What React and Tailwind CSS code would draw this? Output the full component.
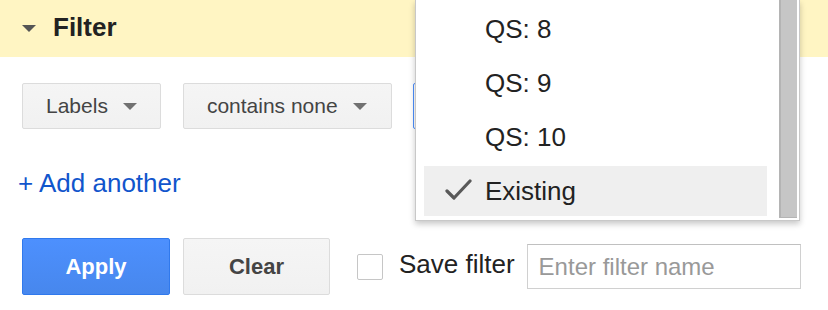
import React from "react"

const font = { fontFamily: '"Liberation Sans", Arial, sans-serif' }

function Caret({ className = "" }) {
  return (
    <svg width="14" height="7" viewBox="0 0 14 7" className={className}>
      <path d="M0 0 H14 L7 7 Z" fill="currentColor" />
    </svg>
  )
}

function SelectButton({ label, wide }) {
  return (
    <button className={`h-[46px] flex items-center gap-[15px] rounded-[2px] border border-[#dcdcdc] bg-gradient-to-b from-[#f5f5f5] to-[#f1f1f1] text-[21px] text-[#444] ${wide ? "pl-[23px] pr-[24px]" : "px-[23px]"}`}>
      <span>{label}</span>
      <Caret className="text-[#717171]" />
    </button>
  )
}

function Dropdown() {
  const items = ["QS: 8", "QS: 9", "QS: 10", "Existing"]
  return (
    <div className="absolute left-[415px] top-0 w-[385px] h-[221px] bg-white border-x border-b border-[#c8c8c8] shadow-[0_3px_6px_rgba(0,0,0,0.22)] flex z-10">
      <div className="flex-1 pl-[8px] pr-[12px] py-[2px]">
        {items.map((it) => {
          const active = it === "Existing"
          return (
            <div key={it} className="h-[54px] py-[2px]">
              <div className={`h-[50px] flex items-center pl-[61px] relative text-[26px] text-[#222] ${active ? "bg-[#efefef]" : ""}`}>
                {active && (
                  <svg width="27" height="22" viewBox="0 0 27 22" className="absolute left-[21px] top-[13px]">
                    <path d="M2 12 L9 19 L25 2" fill="none" stroke="#595959" strokeWidth="3.2" strokeLinecap="round" strokeLinejoin="round" />
                  </svg>
                )}
                {it}
              </div>
            </div>
          )
        })}
      </div>
      <div className="w-[18px] h-[218px] bg-[#c6c6c6] border-l-2 border-b border-[#b4b4b4]" />
      <div className="w-[2px]" />
    </div>
  )
}

export default function App() {
  return (
    <div className="relative w-[828px] h-[310px] bg-white overflow-hidden" style={font}>
      <Dropdown />

      <div className="h-[57px] bg-[#fff5c3] flex items-center pl-[22px] gap-[17px]">
        <Caret className="text-[#555]" />
        <span className="text-[26px] font-bold text-[#222] -mt-[2px]">Filter</span>
      </div>

      <div className="pl-[22px]">
        <div className="mt-[26px] flex gap-[22px]">
          <SelectButton label="Labels" />
          <SelectButton label="contains none" wide />
          <button className="h-[46px] w-[360px] -ml-[1px] rounded-[2px] border border-[#4d90fe] bg-white" />
        </div>

        <div className="mt-[39px] h-[30px] leading-[30px] text-[26px] text-[#1155cc] -ml-[4px]">
          + Add another
        </div>

        <div className="mt-[40px] flex items-center">
          <button className="h-[57px] w-[148px] rounded-[2px] border border-[#3079ed] bg-gradient-to-b from-[#4d90fe] to-[#4787ed] text-white font-bold text-[22px]">
            Apply
          </button>
          <button className="ml-[13px] h-[57px] w-[147px] rounded-[2px] border border-[#dcdcdc] bg-gradient-to-b from-[#f5f5f5] to-[#f1f1f1] text-[#444] font-bold text-[22px]">
            Clear
          </button>
          <div className="ml-[27px] w-[26px] h-[26px] rounded-[2px] border border-[#c6c6c6] bg-white" />
          <span className="ml-[16px] text-[26px] text-[#222] -mt-[4px]">Save filter</span>
          <div className="ml-[12px] w-[274px] h-[45px] border border-[#d0d0d0] border-t-[#c0c0c0] flex items-center pl-[11px] text-[24px] text-[#999]">
            Enter filter name
          </div>
        </div>
      </div>
    </div>
  )
}
